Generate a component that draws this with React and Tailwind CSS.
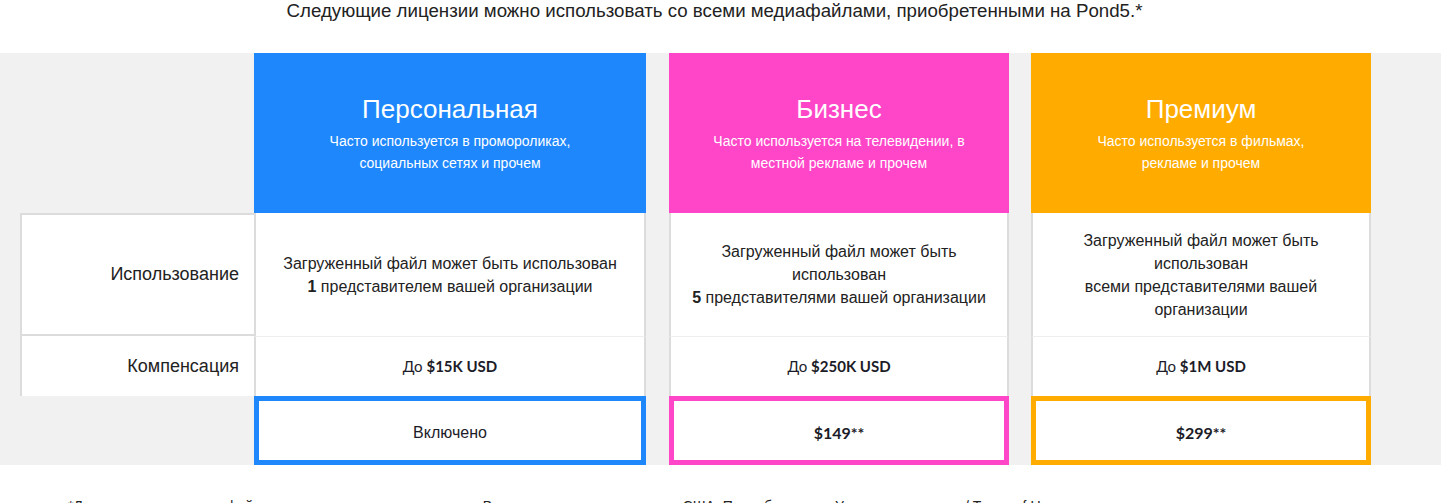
const plans = [
  {
    name: "Персональная",
    note: ["Часто используется в промороликах,", "социальных сетях и прочем"],
    head: "bg-[#1e87fc]",
    box: "border-[#1e87fc]",
    width: "w-[392px]",
    usage: (
      <>
        Загруженный файл может быть использован
        <br />
        <b>1</b> представителем вашей организации
      </>
    ),
    limit: "$15K USD",
    price: "Включено",
    included: true,
  },
  {
    name: "Бизнес",
    note: ["Часто используется на телевидении, в", "местной рекламе и прочем"],
    head: "bg-[#ff45c8]",
    box: "border-[#ff45c8]",
    width: "w-[340px]",
    usage: (
      <>
        Загруженный файл может быть использован
        <br />
        <b>5</b> представителями вашей организации
      </>
    ),
    limit: "$250K USD",
    price: "$149**",
  },
  {
    name: "Премиум",
    note: ["Часто используется в фильмах,", "рекламе и прочем"],
    head: "bg-[#ffab00]",
    box: "border-[#ffab00]",
    width: "w-[340px]",
    usage: (
      <>
        Загруженный файл может быть использован
        <br />
        всеми представителями вашей организации
      </>
    ),
    limit: "$1M USD",
    price: "$299**",
  },
];

const Plan = ({ plan }) => (
  <div className={`${plan.width} flex flex-col shrink-0`}>
    <div className={`${plan.head} h-[160px] flex flex-col items-center justify-center text-white text-center`}>
      <h2 className="text-[26px] leading-[34px]">{plan.name}</h2>
      <p className="text-[14px] leading-[22px] mt-[4px]">
        {plan.note[0]}
        <br />
        {plan.note[1]}
      </p>
    </div>
    <div className="h-[123px] bg-white border-x-2 border-[#dcdcdc] flex items-center justify-center px-[16px] text-center text-[16px] leading-[23px] text-[#222]">
      <p>{plan.usage}</p>
    </div>
    <div className="h-[60px] bg-white border-x-2 border-t border-x-[#dcdcdc] border-t-[#eeeeee] flex items-center justify-center text-[15px] text-[#1c1c28] font-['Lato',sans-serif]">
      До&nbsp;<b>{plan.limit}</b>
    </div>
    <div className={`h-[69px] bg-white border-[5px] ${plan.box} flex items-center justify-center pt-[5px] text-[#1c1c28]`}>
      {plan.included ? (
        <span className="text-[16px]">{plan.price}</span>
      ) : (
        <span className="text-[16px] font-bold font-['Lato',sans-serif]">{plan.price}</span>
      )}
    </div>
  </div>
);

export default function App() {
  return (
    <div className="bg-white min-h-screen font-['Liberation_Sans',Arial,sans-serif]">
      <p className="h-[53px] text-center text-[18.7px] leading-[22px] text-[#222] pr-[12px]">
        Следующие лицензии можно использовать со всеми медиафайлами, приобретенными на Pond5.*
      </p>
      <div className="bg-[#f1f1f1] flex pl-[20px]">
        <div className="w-[234px] shrink-0 flex flex-col">
          <div className="h-[160px]" />
          <div className="h-[123px] bg-white border-l-2 border-y-2 border-[#dcdcdc] flex items-center justify-end pr-[15px] text-[18px] text-[#222]">
            Использование
          </div>
          <div className="h-[60px] bg-white border-l-2 border-[#dcdcdc] flex items-center justify-end pr-[15px] text-[18px] text-[#222]">
            Компенсация
          </div>
        </div>
        <Plan plan={plans[0]} />
        <div className="w-[23px] shrink-0" />
        <Plan plan={plans[1]} />
        <div className="w-[22px] shrink-0" />
        <Plan plan={plans[2]} />
      </div>
      <p className="pt-[31px] pl-[68px] text-[14px] leading-[20px] text-[#222]">
        *Лицензии на все медиафайлы являются неисключительными. Все цены указаны в долларах США. Подробнее см. в Условиях лицензии / Terms of Use
      </p>
    </div>
  );
}
